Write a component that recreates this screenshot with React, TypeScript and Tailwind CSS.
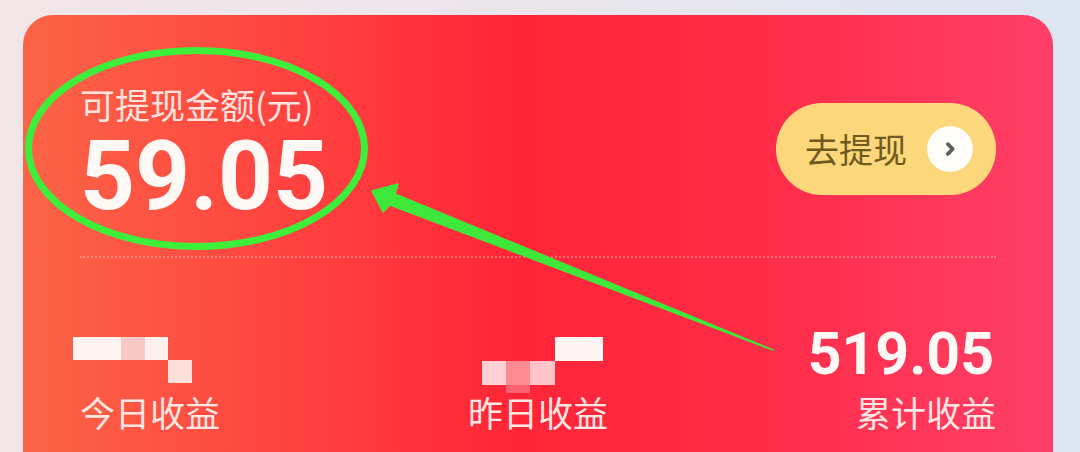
import React from "react";

type Block = { x: number; y: number; w: number; h: number; c: string };

// pixelated (censored) number blocks, coords relative to the mosaic box
const todayBlocks: Block[] = [
  { x: 0, y: 0, w: 48, h: 23, c: "bg-[#fff4f1]" },
  { x: 48, y: 0, w: 24, h: 23, c: "bg-[#f9c9c8]" },
  { x: 72, y: 0, w: 23, h: 23, c: "bg-[#fff1ee]" },
  { x: 95, y: 23, w: 24, h: 23, c: "bg-[#fde0da]" },
];

const yesterdayBlocks: Block[] = [
  { x: 73, y: 0, w: 48, h: 24, c: "bg-[#fff4f4]" },
  { x: 0, y: 24, w: 24, h: 24, c: "bg-[#ffd0d4]" },
  { x: 24, y: 24, w: 24, h: 24, c: "bg-[#ff8a92]" },
  { x: 48, y: 24, w: 25, h: 24, c: "bg-[#ffc3c9]" },
  { x: 24, y: 48, w: 24, h: 8, c: "bg-[#ff6272]" },
];

function Mosaic({ blocks, className }: { blocks: Block[]; className: string }) {
  return (
    <div className={`relative ${className}`}>
      {blocks.map((b, i) => (
        <div
          key={i}
          className={`absolute ${b.c}`}
          style={{ left: b.x, top: b.y, width: b.w, height: b.h }}
        />
      ))}
    </div>
  );
}

function Stat({ label, children, align }: { label: string; children: React.ReactNode; align: string }) {
  return (
    <div className={`flex flex-col ${align}`}>
      {children}
      <span className="font-['Noto_Sans_CJK_SC',sans-serif] text-[35px] leading-[40px] text-[#ffe6e2]">
        {label}
      </span>
    </div>
  );
}

export default function App() {
  return (
    <div className="relative w-[1080px] h-[452px] overflow-hidden bg-[linear-gradient(90deg,#f2e6e8,#ebe6ec_50%,#dde6f3)] pt-[15px] pl-[23px] pr-[27px] font-['Roboto','Noto_Sans_CJK_SC',sans-serif]">
      <div className="h-[480px] rounded-[30px] bg-[linear-gradient(90deg,#fb6446_0%,#ff4440_25%,#ff2537_48%,#ff2c48_72%,#ff3f68_100%)] px-[57px] pt-[69px]">
        {/* top: withdrawable amount + button */}
        <div className="flex items-start justify-between">
          <div className="flex flex-col">
            <span className="font-['Noto_Sans_CJK_SC',sans-serif] text-[35px] leading-[40px] text-[#ffe3de]">
              可提现金额(元)
            </span>
            <span className="mt-[2px] text-[96px] leading-[100px] font-bold text-[#fff9f6]">59.05</span>
          </div>
          <button className="mt-[19px] flex h-[92px] w-[220px] items-center justify-between rounded-full bg-[#fdd77b] pl-[29px] pr-[23px]">
            <span className="font-['Noto_Sans_CJK_SC',sans-serif] text-[34px] leading-none text-[#6f5b1d]">
              去提现
            </span>
            <span className="flex h-[46px] w-[46px] items-center justify-center rounded-full bg-[#fffdf8]">
              <svg width="26" height="26" viewBox="0 0 24 24" fill="none">
                <path d="M10 7.5l4.5 4.5-4.5 4.5" stroke="#5d5d5d" strokeWidth="3.4" strokeLinecap="round" strokeLinejoin="round" />
              </svg>
            </span>
          </button>
        </div>

        <div className="mt-[30px] border-t-2 border-dotted border-[#ffb3a8]/50" />

        {/* bottom: earnings stats */}
        <div className="mt-[70px] grid grid-cols-3 items-end">
          <Stat label="今日收益" align="items-start justify-self-start">
            <Mosaic blocks={todayBlocks} className="ml-[-7px] mb-[9px] h-[46px] w-[120px]" />
          </Stat>
          <Stat label="昨日收益" align="items-start justify-self-center">
            <Mosaic blocks={yesterdayBlocks} className="ml-[14px] mb-[7px] h-[48px] w-[122px]" />
          </Stat>
          <Stat label="累计收益" align="items-end justify-self-end">
            <span className="mb-[12px] mr-[2px] text-[59px] leading-[52px] font-bold text-[#fff9f6]">519.05</span>
          </Stat>
        </div>
      </div>

      {/* green annotation drawn over the card */}
      <svg className="pointer-events-none absolute left-0 top-0" width="1080" height="452" viewBox="0 0 1080 452">
        <ellipse cx="196.5" cy="148.5" rx="168" ry="98" fill="none" stroke="#3def3b" strokeWidth="7" />
        <polygon
          points="372,191 398,184 395,194 773,350 390,205 383,212"
          fill="#3de83a"
          stroke="#3de83a"
          strokeWidth="1.5"
          strokeLinejoin="round"
        />
      </svg>
    </div>
  );
}
